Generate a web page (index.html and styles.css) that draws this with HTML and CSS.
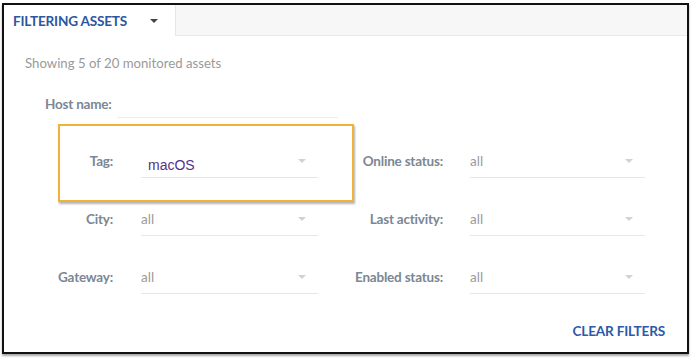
FILE: index.html
```html
<!DOCTYPE html>
<html lang="en">
<head>
    <meta charset="UTF-8">
    <title>Filtering assets</title>
    <link rel="stylesheet" href="styles.css">
</head>
<body>
    <div class="frame">
        <div class="tabbar">
            <div class="tab">
                <span>FILTERING ASSETS</span>
                <span class="tab-caret"></span>
            </div>
        </div>

        <div class="panel">
            <div class="summary">Showing 5 of 20 monitored assets</div>

            <div class="host-row">
                <span class="host-label">Host name:</span>
                <span class="host-input"></span>
            </div>

            <div class="filters">
                <div class="field highlighted">
                    <span class="label">Tag:</span>
                    <span class="select"><span class="value picked">macOS</span><span class="caret"></span></span>
                </div>
                <div class="field wide">
                    <span class="label">Online status:</span>
                    <span class="select"><span class="value">all</span><span class="caret"></span></span>
                </div>
                <div class="field">
                    <span class="label">City:</span>
                    <span class="select"><span class="value">all</span><span class="caret"></span></span>
                </div>
                <div class="field wide">
                    <span class="label">Last activity:</span>
                    <span class="select"><span class="value">all</span><span class="caret"></span></span>
                </div>
                <div class="field">
                    <span class="label">Gateway:</span>
                    <span class="select"><span class="value">all</span><span class="caret"></span></span>
                </div>
                <div class="field wide">
                    <span class="label">Enabled status:</span>
                    <span class="select"><span class="value">all</span><span class="caret"></span></span>
                </div>
            </div>

            <div class="actions">
                <a href="#" class="clear">CLEAR FILTERS</a>
            </div>
        </div>
    </div>
</body>
</html>
```

FILE: styles.css
```css
html, body {
    margin: 0;
    background: white;
}
body {
    padding: 3px 3px 5px 2px;
    font-family: Lato, "Open Sans", sans-serif;
    color: #7a8794;
}
.frame {
    height: 347px;
    border: 2px solid #111;
    box-shadow: 0 2px 2px rgba(0, 0, 0, 0.35);
    overflow: hidden;
}
.tabbar {
    height: 30px;
    background: #f7f7f7;
    border-bottom: 1px solid #e9e9e9;
    display: flex;
}
.tab {
    width: 162px;
    padding-left: 9px;
    background: white;
    border-right: 1px solid #e6e6e6;
    height: 31px;
    display: flex;
    align-items: center;
    gap: 23px;
    font-size: 13.6px;
    font-weight: bold;
    color: #2d55a0;
    letter-spacing: -0.2px;
}
.tab-caret {
    width: 0;
    height: 0;
    border-left: 4px solid transparent;
    border-right: 4px solid transparent;
    border-top: 4px solid #444;
}
.panel {
    padding: 17px 22px 0 21px;
}
.summary {
    font-size: 13.2px;
    line-height: 20px;
    color: #9a9a9a;
}
.host-row {
    display: flex;
    margin: 21px 0 0 20px;
}
.host-label {
    font-size: 13.5px;
    font-weight: bold;
    line-height: 20px;
    width: 72px;
    letter-spacing: -0.2px;
}
.host-input {
    width: 221px;
    height: 23px;
    border-bottom: 1px solid #ececec;
}
.filters {
    display: grid;
    grid-template-columns: 260px 292px;
    column-gap: 35px;
    row-gap: 30px;
    margin: 33px 0 0 33px;
}
.field {
    display: flex;
    align-items: flex-start;
    gap: 28px;
    position: relative;
    height: 28px;
}
.field.wide {
    gap: 27px;
}
.label {
    width: 55px;
    text-align: right;
    font-size: 13.5px;
    font-weight: bold;
    line-height: 20px;
    letter-spacing: -0.2px;
    flex-shrink: 0;
}
.wide .label {
    width: 90px;
}
.select {
    width: 177px;
    display: flex;
    justify-content: space-between;
    align-items: center;
    line-height: 20px;
    padding-bottom: 6px;
    border-bottom: 1px solid #e4e7eb;
    font-size: 13.5px;
    color: #9a9a9a;
}
.wide .select {
    width: 175px;
}
.value.picked {
    font-family: "Liberation Sans", Arial, sans-serif;
    font-size: 14px;
    color: #55318c;
    padding-left: 7px;
    position: relative;
    top: 4px;
}
.caret {
    width: 0;
    height: 0;
    margin-right: 12px;
    border-left: 4px solid transparent;
    border-right: 4px solid transparent;
    border-top: 4px solid #d2d2d2;
}
/* annotation box round the tag filter */
.highlighted::before {
    content: "";
    position: absolute;
    left: 0;
    top: -27px;
    width: 292px;
    height: 74px;
    border: 2px solid #f1b23a;
    box-shadow: 1px 2px 2px rgba(0, 0, 0, 0.3);
}
.actions {
    display: flex;
    justify-content: flex-end;
    margin-top: 28px;
}
.clear {
    font-size: 13.6px;
    font-weight: bold;
    color: #2d5aa6;
    text-decoration: none;
    letter-spacing: -0.2px;
}
```
